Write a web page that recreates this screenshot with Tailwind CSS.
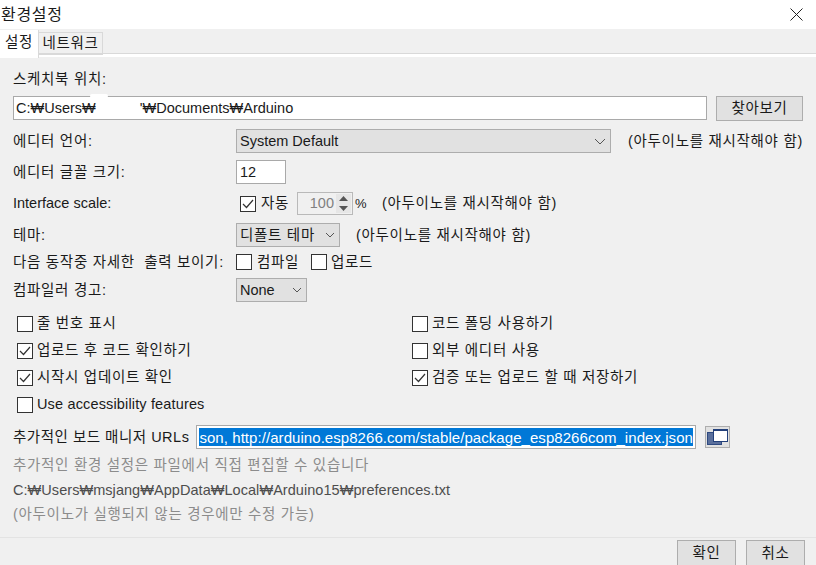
<!DOCTYPE html>
<html lang="ko">
<head>
    <meta charset="UTF-8">
    <title>환경설정</title>
    <script src="https://cdn.jsdelivr.net/npm/@tailwindcss/browser@4"></script>
</head>
<body class="w-[816px] h-[565px] overflow-hidden bg-[#f0f0f0] text-[14.5px] leading-none tracking-[0.7px] text-[#1a1a1a] font-['Liberation_Sans','Noto_Sans_CJK_KR',sans-serif]">
    <!-- 제목 표시줄 -->
    <div class="h-[29px] bg-white flex items-center justify-between pl-px pr-[13px]">
        <span class="text-[16px]">환경설정</span>
        <svg width="13" height="13" viewBox="0 0 13 13" fill="none" stroke="#222" stroke-width="1"><path d="M0.5 0.5L12.5 12.5M12.5 0.5L0.5 12.5"/></svg>
    </div>

    <!-- 탭 -->
    <div class="h-[28px] relative flex items-start border-b-[3px] border-white">
        <div class="absolute left-0 right-0 top-[24px] h-px bg-[#d9d9d9]"></div>
        <div class="relative w-[39px] h-[28px] mt-px bg-white flex items-center justify-center border-r border-[#d9d9d9] pb-1">설정</div>
        <div class="relative w-[64px] h-[23px] mt-[3px] border border-l-0 border-[#d9d9d9] flex items-center justify-center">네트워크</div>
    </div>

    <!-- 설정 내용 -->
    <div class="h-[480px] px-[13px] flex flex-col">
        <div class="h-[39px] flex items-end pb-[10px]">스케치북 위치:</div>
        <div class="flex gap-[9px] h-[24px] relative">
            <div class="w-[694px] h-[24px] bg-white border border-[#a9a9a9] flex items-center pl-[2px] tracking-normal">
                C:₩Users₩<span class="w-[44px]"></span>'₩Documents₩Arduino
            </div>
            <div class="w-[87px] h-[25px] bg-[#e1e1e1] border border-[#adadad] flex items-center justify-center">찾아보기</div>
            <div class="absolute left-[77px] top-[-2px] w-[18px] h-[4px] rounded-full bg-white"></div>
        </div>

        <div class="mt-[9px] h-[24px] flex items-center">
            <div class="w-[223px]">에디터 언어:</div>
            <div class="w-[375px] h-[24px] bg-[#e1e1e1] border border-[#adadad] flex items-center justify-between pl-[3px] pr-[4px] tracking-normal">
                System Default
                <svg width="12" height="7" viewBox="0 0 12 7" fill="none" stroke="#555"><path d="M1 1L6 6L11 1"/></svg>
            </div>
            <div class="ml-[17px] whitespace-nowrap">(아두이노를 재시작해야 함)</div>
        </div>

        <div class="mt-[7px] h-[24px] flex items-center">
            <div class="w-[223px]">에디터 글꼴 크기:</div>
            <div class="w-[50px] h-[24px] bg-white border border-[#a9a9a9] flex items-center pl-[3px] tracking-normal">12</div>
        </div>

        <div class="mt-[8px] h-[23px] flex items-center">
            <div class="w-[227px] tracking-normal">Interface scale:</div>
            <div class="w-[16px] h-[16px] bg-white border border-[#333] flex items-center justify-center">
                <svg width="12" height="10" viewBox="0 0 12 10" fill="none" stroke="#333" stroke-width="1.2"><path d="M1 5L4.5 8.5L11 1"/></svg>
            </div>
            <div class="ml-[5px] w-[36px]">자동</div>
            <div class="w-[56px] h-[23px] border border-[#b9b9b9] flex items-center justify-between pr-[1px] text-[#808080] tracking-normal">
                <span class="ml-auto mr-[2px]">100</span>
                <div class="w-[15px] h-[19px] bg-[#e6e6e6] flex flex-col items-center justify-around">
                    <svg width="9" height="5" viewBox="0 0 9 5" fill="#555"><path d="M4.5 0L9 5H0Z"/></svg>
                    <svg width="9" height="5" viewBox="0 0 9 5" fill="#555"><path d="M4.5 5L9 0H0Z"/></svg>
                </div>
            </div>
            <div class="ml-[2px] w-[27px] text-[13px] tracking-normal">%</div>
            <div class="whitespace-nowrap">(아두이노를 재시작해야 함)</div>
        </div>

        <div class="mt-[8px] h-[24px] flex items-center">
            <div class="w-[223px]">테마:</div>
            <div class="w-[104px] h-[24px] bg-[#e1e1e1] border border-[#adadad] flex items-center justify-between pl-[3px] pr-[4px]">
                디폴트 테마
                <svg width="10" height="6" viewBox="0 0 10 6" fill="none" stroke="#555"><path d="M1 1L5 5L9 1"/></svg>
            </div>
            <div class="ml-[16px] whitespace-nowrap">(아두이노를 재시작해야 함)</div>
        </div>

        <div class="mt-[3px] h-[24px] flex items-center">
            <div class="w-[223px] whitespace-nowrap">다음 동작중 자세한 &nbsp;출력 보이기:</div>
            <div class="w-[16px] h-[16px] bg-white border border-[#333]"></div>
            <div class="ml-[5px] w-[54px]">컴파일</div>
            <div class="w-[16px] h-[16px] bg-white border border-[#333]"></div>
            <div class="ml-[4px]">업로드</div>
        </div>

        <div class="mt-[4px] h-[24px] flex items-center">
            <div class="w-[223px]">컴파일러 경고:</div>
            <div class="w-[71px] h-[24px] bg-[#e1e1e1] border border-[#adadad] flex items-center justify-between pl-[3px] pr-[4px] tracking-normal">
                None
                <svg width="10" height="6" viewBox="0 0 10 6" fill="none" stroke="#555"><path d="M1 1L5 5L9 1"/></svg>
            </div>
        </div>

        <!-- 체크박스 목록 -->
        <div class="mt-[8px] ml-[4px] grid grid-cols-[395px_1fr] auto-rows-[27px] items-center">
            <div class="flex items-center gap-[4px]">
                <div class="w-[16px] h-[16px] bg-white border border-[#333]"></div>줄 번호 표시
            </div>
            <div class="flex items-center gap-[4px]">
                <div class="w-[16px] h-[16px] bg-white border border-[#333]"></div>코드 폴딩 사용하기
            </div>
            <div class="flex items-center gap-[4px]">
                <div class="w-[16px] h-[16px] bg-white border border-[#333] flex items-center justify-center">
                    <svg width="12" height="10" viewBox="0 0 12 10" fill="none" stroke="#333" stroke-width="1.2"><path d="M1 5L4.5 8.5L11 1"/></svg>
                </div>업로드 후 코드 확인하기
            </div>
            <div class="flex items-center gap-[4px]">
                <div class="w-[16px] h-[16px] bg-white border border-[#333]"></div>외부 에디터 사용
            </div>
            <div class="flex items-center gap-[4px]">
                <div class="w-[16px] h-[16px] bg-white border border-[#333] flex items-center justify-center">
                    <svg width="12" height="10" viewBox="0 0 12 10" fill="none" stroke="#333" stroke-width="1.2"><path d="M1 5L4.5 8.5L11 1"/></svg>
                </div>시작시 업데이트 확인
            </div>
            <div class="flex items-center gap-[4px]">
                <div class="w-[16px] h-[16px] bg-white border border-[#333] flex items-center justify-center">
                    <svg width="12" height="10" viewBox="0 0 12 10" fill="none" stroke="#333" stroke-width="1.2"><path d="M1 5L4.5 8.5L11 1"/></svg>
                </div>검증 또는 업로드 할 때 저장하기
            </div>
            <div class="flex items-center gap-[4px] tracking-[0.15px]">
                <div class="w-[16px] h-[16px] bg-white border border-[#333]"></div>Use accessibility features
            </div>
        </div>

        <div class="mt-[7px] h-[24px] flex items-center">
            <div class="w-[183px] whitespace-nowrap tracking-[0.5px]">추가적인 보드 매니저 URLs</div>
            <div class="w-[500px] h-[24px] bg-white border border-[#a9a9a9] flex items-center p-[2px]">
                <div class="w-full h-[18px] bg-[#0078d7] text-white text-[15px] tracking-[0.06px] flex items-center justify-end overflow-hidden whitespace-nowrap">son, http://arduino.esp8266.com/stable/package_esp8266com_index.json</div>
            </div>
            <div class="ml-[9px] w-[25px] h-[22px] bg-[#e1e1e1] border border-[#adadad] relative">
                <div class="absolute left-[1px] top-[5px] w-[15px] h-[13px] bg-[#5a6f9c] border border-[#2f4a80]"></div>
                <div class="absolute left-[7px] top-[2px] w-[15px] h-[13px] bg-white border border-[#23407a] border-t-2"></div>
            </div>
        </div>

        <div class="mt-[6px] h-[20px] flex items-center text-[#8c8c8c]">추가적인 환경 설정은 파일에서 직접 편집할 수 있습니다</div>
        <div class="mt-[5px] h-[20px] flex items-center text-[#4d4d4d] tracking-[0.05px]">C:₩Users₩msjang₩AppData₩Local₩Arduino15₩preferences.txt</div>
        <div class="mt-[4px] h-[20px] flex items-center text-[#8c8c8c]">(아두이노가 실행되지 않는 경우에만 수정 가능)</div>
    </div>

    <!-- 하단 버튼 -->
    <div class="h-[28px] border-t border-[#e3e3e3] flex justify-end gap-[10px] pt-[2px] pr-[11px]">
        <div class="w-[59px] h-[26px] bg-[#e1e1e1] border border-[#adadad] flex items-center justify-center">확인</div>
        <div class="w-[59px] h-[26px] bg-[#e1e1e1] border border-[#adadad] flex items-center justify-center">취소</div>
    </div>
</body>
</html>
